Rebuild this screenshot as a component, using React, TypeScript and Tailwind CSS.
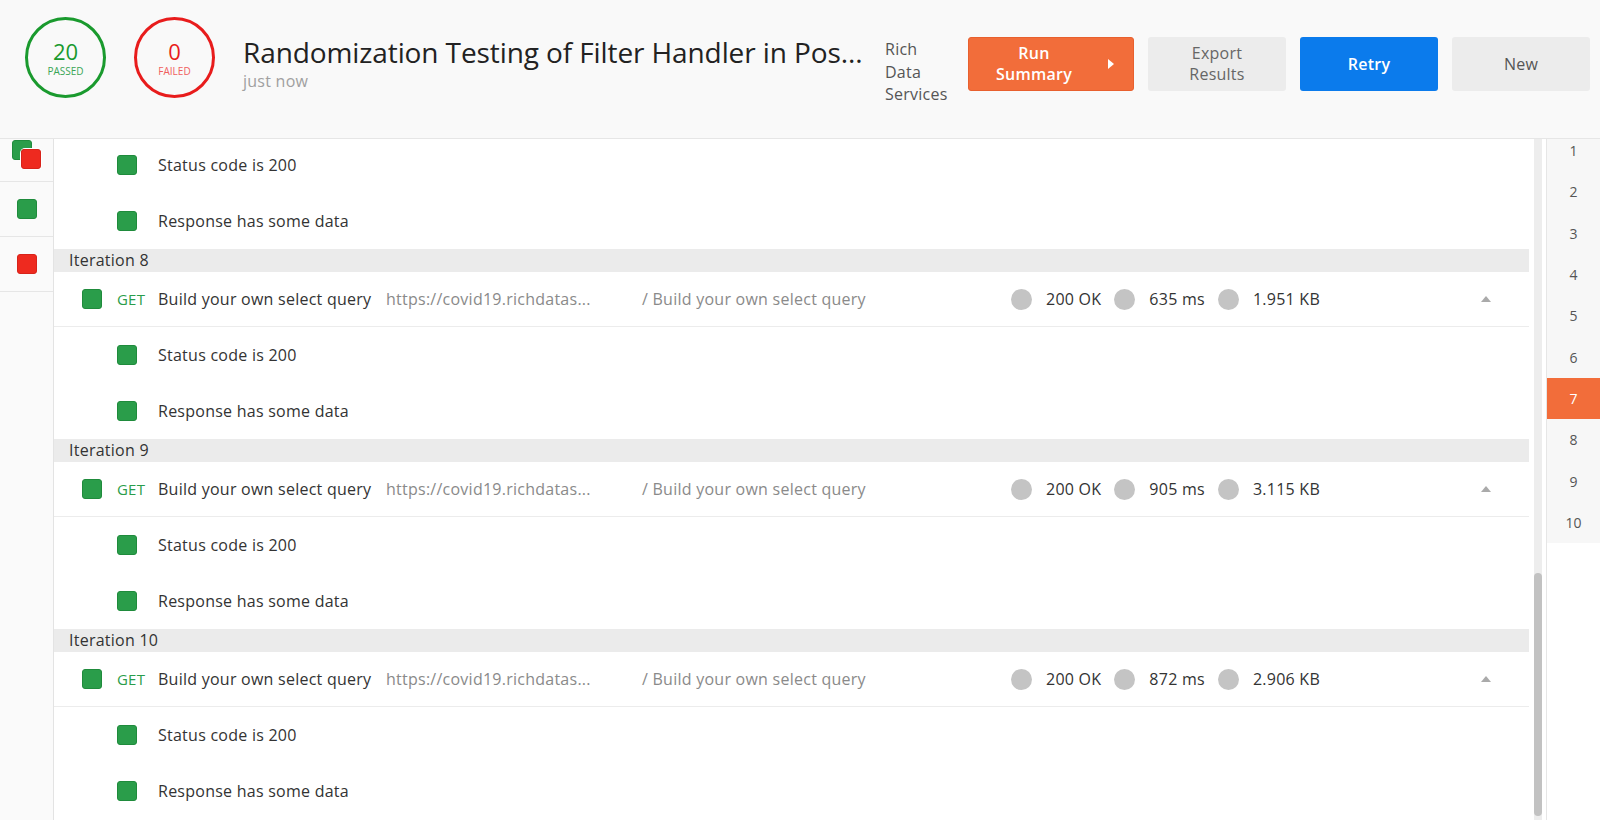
import React from "react";

type Stat = { time: string; size: string };

const iterations: { n: number; stat: Stat }[] = [
  { n: 8, stat: { time: "635 ms", size: "1.951 KB" } },
  { n: 9, stat: { time: "905 ms", size: "3.115 KB" } },
  { n: 10, stat: { time: "872 ms", size: "2.906 KB" } },
];

const tests = ["Status code is 200", "Response has some data"];

const GreenBox = () => (
  <div className="w-[20px] h-[20px] rounded-[3px] bg-[#2a9d4a] border border-[#1f8b3c] shrink-0" />
);

const RedBox = () => (
  <div className="w-[20px] h-[20px] rounded-[3px] bg-[#ee2a1f] border border-[#d8231a] shrink-0" />
);

const TestRow = ({ label }: { label: string }) => (
  <div className="h-[56px] flex items-center pl-[63px]">
    <GreenBox />
    <span className="ml-[21px] text-[16px] tracking-[0.25px] text-[#333]">{label}</span>
  </div>
);

const Dot = () => <div className="w-[21px] h-[21px] rounded-full bg-[#c4c4c4] shrink-0" />;

const RequestRow = ({ stat }: { stat: Stat }) => (
  <div className="h-[55px] flex items-center pl-[28px] pr-[38px] border-b border-[#ececec] text-[16px] tracking-[0.25px]">
    <GreenBox />
    <span className="ml-[15px] w-[41px] text-[15px] tracking-[0.2px] text-[#2a9d4a]">GET</span>
    <span className="w-[228px] text-[#333]">Build your own select query</span>
    <span className="w-[256px] text-[#8a8a8a]">https://covid19.richdatas...</span>
    <span className="w-[369px] text-[#8a8a8a]">/ Build your own select query</span>
    <div className="flex items-center text-[#333]">
      <Dot />
      <span className="ml-[14px] mr-[13px]">200 OK</span>
      <Dot />
      <span className="ml-[14px] mr-[13px]">{stat.time}</span>
      <Dot />
      <span className="ml-[14px]">{stat.size}</span>
    </div>
    <div className="ml-auto w-0 h-0 border-l-[5px] border-r-[5px] border-b-[6px] border-l-transparent border-r-transparent border-b-[#aaa]" />
  </div>
);

const Iteration = ({ n, stat }: { n: number; stat: Stat }) => (
  <div>
    <div className="h-[23px] bg-[#ebebeb] pl-[15px] text-[16px] tracking-[0.25px] leading-[23px] text-[#333]">
      Iteration {n}
    </div>
    <RequestRow stat={stat} />
    {tests.map((t) => (
      <TestRow key={t} label={t} />
    ))}
  </div>
);

export default function App() {
  return (
    <div className="w-[1600px] h-[820px] flex flex-col bg-white overflow-hidden font-['Open_Sans',sans-serif]">
      {/* Header */}
      <header className="h-[139px] shrink-0 bg-[#f9f9f9] border-b border-[#e6e6e6] flex items-start pl-[25px] pr-[10px]">
        <div className="mt-[17px] w-[81px] h-[81px] rounded-full border-[3px] border-[#1a9a2e] flex flex-col items-center justify-center">
          <span className="text-[22px] leading-[26px] text-[#1a9a2e]">20</span>
          <span className="text-[10px] leading-[14px] text-[#3aa655]">PASSED</span>
        </div>
        <div className="mt-[17px] ml-[28px] w-[81px] h-[81px] rounded-full border-[3px] border-[#e81c1c] flex flex-col items-center justify-center">
          <span className="text-[22px] leading-[26px] text-[#e81c1c]">0</span>
          <span className="text-[10px] leading-[14px] text-[#f06060]">FAILED</span>
        </div>
        <div className="mt-[33px] ml-[28px] w-[614px]">
          <div className="text-[28px] tracking-[-0.1px] leading-[38px] text-[#222] whitespace-nowrap">
            Randomization Testing of Filter Handler in Pos...
          </div>
          <div className="text-[16px] tracking-[0.25px] leading-[20px] text-[#a0a0a0]">just now</div>
        </div>
        <div className="mt-[38px] ml-[28px] w-[66px] text-[16px] tracking-[0.25px] leading-[22.5px] text-[#555]">
          Rich
          <br />
          Data
          <br />
          Services
        </div>
        <div className="mt-[37px] ml-auto flex gap-[14px] text-[16px] tracking-[0.25px]">
          <button className="w-[166px] h-[54px] rounded-[3px] bg-[#f26d3a] border border-[#e8602e] flex items-center">
            <span className="w-[130px] leading-[21px] font-semibold text-white text-center">
              Run
              <br />
              Summary
            </span>
            <span className="ml-[9px] w-0 h-0 border-t-[5px] border-b-[5px] border-l-[6px] border-t-transparent border-b-transparent border-l-white" />
          </button>
          <button className="w-[138px] h-[54px] rounded-[3px] bg-[#ececec] leading-[21px] text-[#666]">
            Export
            <br />
            Results
          </button>
          <button className="w-[138px] h-[54px] rounded-[3px] bg-[#0b7bec] font-semibold text-white">
            Retry
          </button>
          <button className="w-[138px] h-[54px] rounded-[3px] bg-[#ececec] text-[#555]">
            New
          </button>
        </div>
      </header>

      {/* Body */}
      <div className="flex flex-1 min-h-0">
        {/* Iteration status sidebar */}
        <aside className="w-[54px] shrink-0 bg-[#fafafa] border-r border-[#e3e3e3] overflow-hidden">
          <div className="-mt-[12px]">
            <div className="h-[55px] border-b border-[#e6e6e6] flex items-center justify-center">
              <div className="relative w-[29px] h-[29px]">
                <div className="absolute left-0 top-0">
                  <GreenBox />
                </div>
                <div className="absolute left-[9px] top-[9px] rounded-[4px] ring-1 ring-white">
                  <RedBox />
                </div>
              </div>
            </div>
            <div className="h-[55px] border-b border-[#e6e6e6] flex items-center justify-center">
              <GreenBox />
            </div>
            <div className="h-[55px] border-b border-[#e6e6e6] flex items-center justify-center">
              <RedBox />
            </div>
          </div>
        </aside>

        {/* Results list */}
        <main className="w-[1475px] shrink-0 overflow-hidden">
          <div className="-mt-[2px]">
            {tests.map((t) => (
              <TestRow key={t} label={t} />
            ))}
            {iterations.map((it) => (
              <Iteration key={it.n} n={it.n} stat={it.stat} />
            ))}
          </div>
        </main>

        {/* Scrollbar */}
        <div className="w-[17px] shrink-0 pl-[5px] pr-[4px]">
          <div className="h-full bg-[#ededed] pt-[434px]">
            <div className="h-[243px] rounded-full bg-[#c2c2c2]" />
          </div>
        </div>

        {/* Iteration index */}
        <nav className="w-[54px] shrink-0 border-l border-[#e6e6e6] bg-white overflow-hidden">
          <div className="-mt-[9px] bg-[#f7f7f7]">
            {[1, 2, 3, 4, 5, 6, 7, 8, 9, 10].map((n) => (
              <div
                key={n}
                className={
                  n === 7
                    ? "h-[41.3px] flex items-center justify-center text-[14px] bg-[#f26d3a] text-white"
                    : "h-[41.3px] flex items-center justify-center text-[14px] text-[#555]"
                }
              >
                {n}
              </div>
            ))}
          </div>
        </nav>
      </div>
    </div>
  );
}
